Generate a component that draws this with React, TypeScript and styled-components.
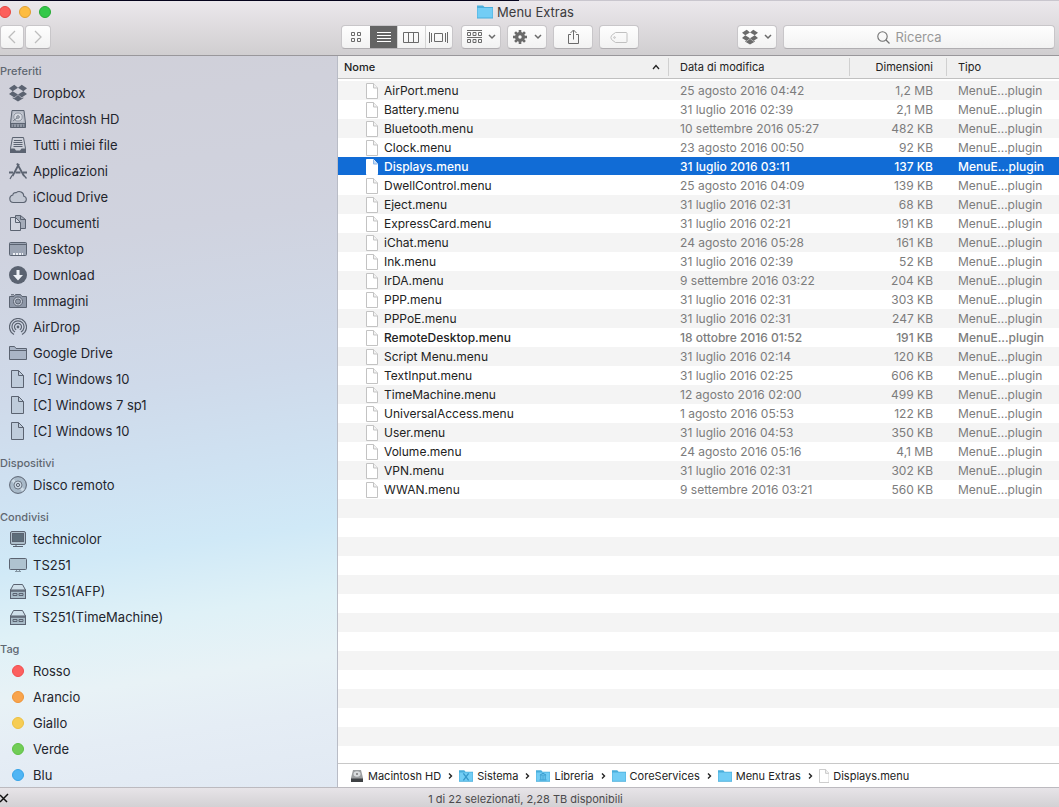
import React, { useState } from 'react';
import styled, { createGlobalStyle, css } from 'styled-components';

const GlobalStyle = createGlobalStyle`
  *, *::before, *::after { box-sizing: border-box; }
  body { margin: 0; font-family: Inter, "Liberation Sans", sans-serif; color: #222; }
  button, input { font: inherit; color: inherit; margin: 0; padding: 0; }
`;

const Window = styled.div`
  display: flex;
  flex-direction: column;
  height: 100vh;
  overflow: hidden;
  background: #fff;
`;

const TopEdge = styled.div`
  flex: none;
  height: 1px;
  background: linear-gradient(to right, #05031c 49%, #c9c6ce 49%);
`;

const TitleArea = styled.header`
  flex: none;
  height: 55px;
  padding-top: 1px;
  border-bottom: 1px solid #99979b;
  background: linear-gradient(#ebe8ec, #d0ced0);
`;

const TitleBar = styled.div`
  display: grid;
  grid-template-columns: 1fr auto 1fr;
  align-items: center;
  height: 19px;
  padding-right: 8px;
`;

const Lights = styled.div`
  display: flex;
  gap: 8px;
  margin-left: -1px;
`;

const Light = styled.button<{ $fill: string; $edge: string }>`
  width: 12px;
  height: 12px;
  border: 1px solid ${p => p.$edge};
  border-radius: 50%;
  background: ${p => p.$fill};
`;

const Title = styled.h1`
  display: flex;
  align-items: center;
  gap: 4px;
  margin: 0;
  font-size: 13px;
  font-weight: 400;
  line-height: 18px;
  color: #3b3a3d;
`;

const Toolbar = styled.div`
  display: flex;
  align-items: center;
  gap: 6px;
  height: 32px;
  padding-right: 4px;
`;

const NavGroup = styled.div`
  display: flex;
  gap: 1px;
  flex: none;
  width: 335px;
`;

const face = css`
  height: 24px;
  border: 1px solid #c8c6c9;
  border-bottom-color: #b0aeb1;
  border-radius: 4px;
  background: linear-gradient(#fefefe, #f2f2f2);
`;

const ToolButton = styled.button<{ $width: number; $tone?: string }>`
  ${face}
  display: flex;
  align-items: center;
  justify-content: center;
  gap: 6px;
  flex: none;
  width: ${p => p.$width}px;
  color: ${p => p.$tone || '#6a6a6a'};
`;

const Segments = styled.div`
  ${face}
  display: grid;
  grid-template-columns: 28px 27px 1fr 1fr;
  flex: none;
  width: 112px;
  margin-right: 2px;
  overflow: hidden;
`;

const Segment = styled.button<{ $on?: boolean }>`
  display: flex;
  align-items: center;
  justify-content: center;
  border: 0;
  border-left: 1px solid ${p => (p.$on ? '#646464' : '#d5d5d5')};
  background: ${p => (p.$on ? '#646464' : 'transparent')};
  color: ${p => (p.$on ? '#fff' : '#6a6a6a')};
  &:first-child { border-left: 0; }
`;

const Spacer = styled.div`
  flex: 1;
`;

const Search = styled.label`
  ${face}
  display: flex;
  align-items: center;
  justify-content: center;
  gap: 6px;
  flex: none;
  width: 272px;
  color: #717171;
`;

const SearchInput = styled.input`
  width: 66px;
  border: 0;
  outline: 0;
  background: transparent;
  font-size: 13px;
  line-height: 16px;
  &::placeholder { color: #989898; opacity: 1; }
`;

const Body = styled.div`
  display: flex;
  flex: 1;
  min-height: 0;
`;

const Sidebar = styled.nav`
  flex: none;
  width: 338px;
  padding-top: 6px;
  overflow: hidden;
  border-right: 1px solid #b9bcc6;
  background: linear-gradient(172deg, #d0d0d9 0%, #d0d3df 25%, #cfdaea 45%, #cfe2f2 57%, #d0e9f7 66%, #dff1f7 75%, #e8f2f6 83%, #e5edf5 90%, #e1e9f3 100%);
`;

const Group = styled.section`
  margin-bottom: 10px;
`;

const GroupTitle = styled.h2`
  margin: 0;
  font-size: 11px;
  font-weight: 500;
  line-height: 18px;
  color: #5f6771;
`;

const PlaceList = styled.ul`
  margin: 0;
  padding: 0;
  list-style: none;
`;

const Place = styled.a`
  display: flex;
  align-items: center;
  gap: 6px;
  height: 26px;
  padding-left: 9px;
  font-size: 13px;
  color: #1f252d;
  text-decoration: none;
`;

const IconSlot = styled.span`
  display: flex;
  justify-content: center;
  flex: none;
  width: 18px;
  color: #5b6371;
`;

const Dot = styled.span<{ $fill: string; $edge: string }>`
  width: 12px;
  height: 12px;
  border: 1px solid ${p => p.$edge};
  border-radius: 50%;
  background: ${p => p.$fill};
`;

const Main = styled.main`
  display: flex;
  flex-direction: column;
  flex: 1;
  min-width: 0;
`;

const Table = styled.table`
  width: 100%;
  table-layout: fixed;
  border-collapse: separate;
  border-spacing: 0;
  font-size: 12px;
  line-height: 18px;
  tbody::before { content: ''; display: block; height: 2px; }
`;

const Col = styled.col<{ $width?: number }>`
  ${p => p.$width && `width: ${p.$width}px;`}
`;

const Th = styled.th<{ $right?: boolean; $strong?: boolean }>`
  height: 23px;
  padding: 0;
  border-bottom: 1px solid #c0c0c0;
  background: #f0f0f0;
  font-size: 11px;
  font-weight: ${p => (p.$strong ? 500 : 400)};
  color: #222;
  text-align: ${p => (p.$right ? 'right' : 'left')};
`;

const ThInner = styled.div<{ $right?: boolean; $last?: boolean; $first?: boolean }>`
  display: flex;
  align-items: center;
  justify-content: ${p => (p.$right ? 'flex-end' : 'space-between')};
  height: 18px;
  padding: ${p => (p.$right ? '0 13px 0 0' : p.$first ? '0 8px 0 6px' : '0 11px')};
  border-right: ${p => (p.$last ? '0' : '1px solid #d0d0d0')};
`;

const Row = styled.tr<{ $selected?: boolean; $strong?: boolean }>`
  height: 19px;
  font-weight: ${p => (p.$selected || p.$strong ? 500 : 400)};
  color: ${p => (p.$selected ? '#fff' : '#7c7c7c')};
  &:nth-child(odd) { background: #f4f4f4; }
  ${p => p.$selected && css`&&:nth-child(n) { background: linear-gradient(#116cd6 18px, #fff 18px); }`}
  td { padding: 0 11px; white-space: nowrap; }
  td:first-child { padding: 0 0 0 28px; color: ${p => (p.$selected ? '#fff' : '#222')}; }
  td:nth-child(3) { padding: 0 14px 0 0; text-align: right; }
`;

const FileName = styled.div`
  display: flex;
  align-items: center;
  gap: 6px;
  height: 18px;
`;

const EmptyRows = styled.div`
  flex: 1;
  background: repeating-linear-gradient(#f4f4f4 0 19px, #fff 19px 38px);
`;

const PathBar = styled.ol`
  display: flex;
  align-items: center;
  flex: none;
  height: 24px;
  margin: 0;
  padding: 0 0 0 12px;
  border-top: 1px solid #c8c8c8;
  background: #fff;
  list-style: none;
  font-size: 11px;
`;

const Crumb = styled.li`
  display: flex;
  align-items: center;
  gap: 4px;
  color: #222;
`;

const Separator = styled.span`
  display: flex;
  margin: 0 2px 0 6px;
`;

const StatusBar = styled.footer`
  display: flex;
  align-items: center;
  flex: none;
  height: 20px;
  border-top: 1px solid #bcbabf;
  background: linear-gradient(#e7e4e8, #d3d1d4);
  font-size: 11px;
  line-height: 20px;
  color: #4b4a4c;
`;

const StatusText = styled.span`
  flex: 1;
  padding: 2px 17px 0 0;
  text-align: center;
`;

type SvgProps = { w?: number; h?: number; box?: string; children: React.ReactNode };
const Svg = ({ w = 18, h = 18, box, children }: SvgProps) => (
  <svg width={w} height={h} viewBox={box || `0 0 ${w} ${h}`} fill="none" stroke="currentColor" strokeWidth="1" aria-hidden="true">
    {children}
  </svg>
);

const Chevron = () => <Svg w={8} h={6}><path d="M1 1l3 3 3-3" strokeWidth="1.5" /></Svg>;

const DropboxIcon = ({ size = 18 }: { size?: number }) => (
  <Svg w={size} h={size} box="0 0 24 24">
    <path fill="currentColor" stroke="none" d="M7.060 1L0 5.610l4.882 3.910L12 5.123zM0 13.430l7.060 4.610L12 13.918 4.882 9.520zM12 13.918l4.940 4.122L24 13.430l-4.882-3.910zM24 5.610L16.940 1 12 5.123l7.118 4.397zM12.014 14.805L7.060 18.918l-2.120-1.385v1.552l7.074 4.242 7.088-4.242v-1.552l-2.120 1.385z" />
  </Svg>
);
const DriveIcon = () => (
  <Svg>
    <path d="M3 .5h12l1.500 12.500v4.500h-15V13z" fill="#b4b9c4" />
    <path d="M2 13.500h14v4H2z" fill="#8f96a3" />
    <path d="M4.500 2.500h9l1 9h-11z" fill="#c9cdd6" stroke="none" />
    <ellipse cx="9" cy="7" rx="4.200" ry="4" strokeWidth=".8" stroke="#7c8492" fill="#d8dbe2" />
    <circle cx="9" cy="7" r="1.300" strokeWidth=".8" />
    <path d="M8 8l-4 3M4.500 14.500v2.500M7.500 14.500v2.500M10.500 14.500v2.500M13.500 14.500v2.500" strokeWidth=".8" />
  </Svg>
);
const TrayIcon = () => (
  <Svg>
    <path d="M3.500 1.500h11l2 11v4h-15v-4z" fill="#cdd0d9" />
    <path d="M5 4.500h8M4.500 6.500h9M4.500 8.500h9M4.500 10.500h9" />
    <path d="M1 12.500h4.500l1.500 2h4l1.500-2H17v4.500H1z" fill="currentColor" stroke="none" />
  </Svg>
);
const AppsIcon = () => (
  <Svg>
    <path d="M10 2L3.500 14M8 1.500l7 12.500" strokeWidth="1.800" />
    <path d="M0 10.500h4M6.500 10.500h5M14 10.500h4" strokeWidth="2" />
    <path d="M3 13.500L1 17M15 13.500l2.500 3" strokeWidth="1.300" />
  </Svg>
);
const CloudIcon = () => (
  <Svg><path d="M4.300 14.500a3.800 3.800 0 0 1-.5-7.500 2.700 2.700 0 0 1 3.400-2.300 4.600 4.600 0 0 1 7.600 3.500 3.200 3.200 0 0 1-.3 6.300z" fill="#c3c8d3" strokeWidth="1.100" /></Svg>
);
const DocumentsIcon = () => (
  <Svg>
    <path d="M6.500 1.500h5l5 4v9h-10z" fill="#a4abb8" />
    <path d="M11.500 1.500v4h5" />
    <path d="M1.500 3.500h5l5 5v8h-10z" fill="#d2d5df" />
    <path d="M6.500 3.500v5h5" />
  </Svg>
);
const DesktopIcon = () => (
  <Svg>
    <rect x=".5" y="2.500" width="17" height="13" rx="1" fill="#9ba3b2" />
    <path d="M1 4.500h16" />
    <path d="M4 14h2M7 14h2M10 14h2M13 14h1" stroke="#eef0f5" strokeWidth="2" />
  </Svg>
);
const DownloadIcon = () => (
  <Svg>
    <circle cx="9" cy="9" r="9" fill="currentColor" stroke="none" />
    <path d="M7.500 4h3v5h3.500L9 14.500 4 9h3.500z" fill="#eef1f6" stroke="none" />
  </Svg>
);
const CameraIcon = () => (
  <Svg>
    <path d="M.5 4.500h4.500l1.500-2h5l1.500 2h4.500v11H.5z" fill="#8f98a8" />
    <path d="M2 2.800h3" strokeWidth="1.200" />
    <circle cx="9" cy="9.500" r="4.500" fill="#c5cbd7" />
    <circle cx="9" cy="9.500" r="2.500" fill="#9099a8" />
  </Svg>
);
const AirDropIcon = () => (
  <Svg>
    <path d="M5 16.500a8.500 8.500 0 1 1 8 0M6 14a6 6 0 1 1 6 0M7.200 11.800a3.500 3.500 0 1 1 3.600 0" strokeWidth="1.200" />
    <circle cx="9" cy="9" r="1.400" fill="currentColor" stroke="none" />
  </Svg>
);
const FolderOutlineIcon = () => (
  <Svg>
    <path d="M.5 15.500v-13h5l1.500 2h10.500v11z" fill="#aab5c6" />
    <path d="M.5 6.500h17" />
  </Svg>
);
const PageIcon = () => (
  <Svg>
    <path d="M2.500.5h7l5 5v12h-12z" fill="#bfccdb" />
    <path d="M9.500.5v5h5" />
  </Svg>
);
const DiscIcon = () => (
  <Svg>
    <circle cx="9" cy="9" r="8.400" fill="#a9bac9" />
    <path d="M3.500 4l3 3M11.500 11.500l3 3" stroke="#cfdce7" strokeWidth="3" />
    <circle cx="9" cy="9" r="4" fill="#cbd8e4" strokeWidth=".8" />
    <circle cx="9" cy="9" r="1.600" />
  </Svg>
);
const CrtIcon = () => (
  <Svg>
    <rect x="1.500" y="1.500" width="15" height="13" rx="1.500" fill="#aebfcb" />
    <rect x="3.500" y="3.500" width="11" height="8" fill="#5d6d7a" />
    <path d="M4 16.500h10M7 15v1" />
  </Svg>
);
const DisplayIcon = () => (
  <Svg>
    <rect x=".5" y="2.500" width="17" height="11" rx="1" fill="#afc3d0" />
    <path d="M7.500 14v2M10.500 14v2M6 15.500h6" stroke="#8394a1" />
  </Svg>
);
const ServerIcon = () => (
  <Svg>
    <path d="M1.500 8l3-5.500h9l3 5.500" fill="#cfe0ea" />
    <rect x="1.500" y="8" width="15" height="8.500" fill="#a9bcc8" />
    <path d="M2 9h14" strokeWidth="1.500" />
    <path d="M4 11.500h4v2H4zM10 11.500h4v2h-4z" />
  </Svg>
);

const BlueFolder = ({ size = 14, badge }: { size?: number; badge?: 'x' | 'library' }) => (
  <svg width={size} height={size} viewBox="0 0 16 16" aria-hidden="true">
    <path d="M0 14.500v-13h6l1.500 1.500H16v11.500z" fill="#49aedb" />
    <path d="M.5 13.500V4h15v9.500z" fill="#72cdf5" />
    {badge === 'x' && <path d="M5 5l6 8M11 5l-6 8" stroke="#3597c9" strokeWidth="1.500" />}
    {badge === 'library' && <path d="M4.500 7L8 4.800 11.500 7zM4 12.500h8M5.500 8v4M8 8v4M10.500 8v4" stroke="#3597c9" fill="none" />}
  </svg>
);

const FileIcon = ({ size = 16, selected }: { size?: number; selected?: boolean }) => (
  <svg width={size * 3 / 4} height={size} viewBox="0 0 12 16" aria-hidden="true">
    <path d="M.5.500h7l4 4.500v10.500H.5z" fill="#fff" stroke={selected ? '#fff' : '#c3c3c3'} />
    <path d="M7.500.5V5h4" fill={selected ? '#c3daf5' : '#f2f2f2'} stroke={selected ? '#8db8ea' : '#c3c3c3'} />
  </svg>
);

const MiniDrive = () => (
  <svg width="14" height="14" viewBox="0 0 14 14" aria-hidden="true">
    <path d="M3 1h8l2 8v4H1V9z" fill="#9b9ea0" />
    <path d="M1 9.500h12V13H1z" fill="#3e4144" />
    <ellipse cx="7" cy="5" rx="3.500" ry="2.800" fill="#d9dcde" />
    <circle cx="7" cy="5" r="1" fill="#777" />
  </svg>
);

const gearTeeth = [0, 45, 90, 135];
const GearIcon = () => (
  <Svg w={16} h={16}>
    {gearTeeth.map(angle => <path key={angle} d="M8 1v14" strokeWidth="2.600" transform={`rotate(${angle} 8 8)`} />)}
    <circle cx="8" cy="8" r="5" fill="currentColor" stroke="none" />
    <circle cx="8" cy="8" r="1.700" stroke="none" fill="#f8f8f8" />
  </Svg>
);

type PlaceItem = { name: string; icon?: React.ReactNode; dot?: [string, string] };
const groups: { title: string; places: PlaceItem[] }[] = [
  {
    title: 'Preferiti',
    places: [
      { name: 'Dropbox', icon: <DropboxIcon /> },
      { name: 'Macintosh HD', icon: <DriveIcon /> },
      { name: 'Tutti i miei file', icon: <TrayIcon /> },
      { name: 'Applicazioni', icon: <AppsIcon /> },
      { name: 'iCloud Drive', icon: <CloudIcon /> },
      { name: 'Documenti', icon: <DocumentsIcon /> },
      { name: 'Desktop', icon: <DesktopIcon /> },
      { name: 'Download', icon: <DownloadIcon /> },
      { name: 'Immagini', icon: <CameraIcon /> },
      { name: 'AirDrop', icon: <AirDropIcon /> },
      { name: 'Google Drive', icon: <FolderOutlineIcon /> },
      { name: '[C] Windows 10', icon: <PageIcon /> },
      { name: '[C] Windows 7 sp1', icon: <PageIcon /> },
      { name: '[C] Windows 10', icon: <PageIcon /> },
    ],
  },
  { title: 'Dispositivi', places: [{ name: 'Disco remoto', icon: <DiscIcon /> }] },
  {
    title: 'Condivisi',
    places: [
      { name: 'technicolor', icon: <CrtIcon /> },
      { name: 'TS251', icon: <DisplayIcon /> },
      { name: 'TS251(AFP)', icon: <ServerIcon /> },
      { name: 'TS251(TimeMachine)', icon: <ServerIcon /> },
    ],
  },
  {
    title: 'Tag',
    places: [
      { name: 'Rosso', dot: ['#fc605f', '#f24c4c'] },
      { name: 'Arancio', dot: ['#f8a44d', '#ef9437'] },
      { name: 'Giallo', dot: ['#f6cd55', '#ecc040'] },
      { name: 'Verde', dot: ['#71cd57', '#5fc144'] },
      { name: 'Blu', dot: ['#4fb5f4', '#36a4e8'] },
    ],
  },
];

const files: [string, string, string][] = [
  ['AirPort.menu', '25 agosto 2016 04:42', '1,2 MB'],
  ['Battery.menu', '31 luglio 2016 02:39', '2,1 MB'],
  ['Bluetooth.menu', '10 settembre 2016 05:27', '482 KB'],
  ['Clock.menu', '23 agosto 2016 00:50', '92 KB'],
  ['Displays.menu', '31 luglio 2016 03:11', '137 KB'],
  ['DwellControl.menu', '25 agosto 2016 04:09', '139 KB'],
  ['Eject.menu', '31 luglio 2016 02:31', '68 KB'],
  ['ExpressCard.menu', '31 luglio 2016 02:21', '191 KB'],
  ['iChat.menu', '24 agosto 2016 05:28', '161 KB'],
  ['Ink.menu', '31 luglio 2016 02:39', '52 KB'],
  ['IrDA.menu', '9 settembre 2016 03:22', '204 KB'],
  ['PPP.menu', '31 luglio 2016 02:31', '303 KB'],
  ['PPPoE.menu', '31 luglio 2016 02:31', '247 KB'],
  ['RemoteDesktop.menu', '18 ottobre 2016 01:52', '191 KB'],
  ['Script Menu.menu', '31 luglio 2016 02:14', '120 KB'],
  ['TextInput.menu', '31 luglio 2016 02:25', '606 KB'],
  ['TimeMachine.menu', '12 agosto 2016 02:00', '499 KB'],
  ['UniversalAccess.menu', '1 agosto 2016 05:53', '122 KB'],
  ['User.menu', '31 luglio 2016 04:53', '350 KB'],
  ['Volume.menu', '24 agosto 2016 05:16', '4,1 MB'],
  ['VPN.menu', '31 luglio 2016 02:31', '302 KB'],
  ['WWAN.menu', '9 settembre 2016 03:21', '560 KB'],
];

const crumbs: { name: string; icon: React.ReactNode }[] = [
  { name: 'Macintosh HD', icon: <MiniDrive /> },
  { name: 'Sistema', icon: <BlueFolder badge="x" /> },
  { name: 'Libreria', icon: <BlueFolder badge="library" /> },
  { name: 'CoreServices', icon: <BlueFolder /> },
  { name: 'Menu Extras', icon: <BlueFolder /> },
  { name: 'Displays.menu', icon: <FileIcon size={14} /> },
];

export default function App() {
  const [selected, setSelected] = useState('Displays.menu');
  return (
    <Window>
      <GlobalStyle />
      <TopEdge />
      <TitleArea>
        <TitleBar>
          <Lights>
            <Light $fill="#fc605c" $edge="#e64842" aria-label="Chiudi" />
            <Light $fill="#fdbc40" $edge="#e0a032" aria-label="Riduci" />
            <Light $fill="#34c84a" $edge="#27aa35" aria-label="Ingrandisci" />
          </Lights>
          <Title><BlueFolder size={16} />Menu Extras</Title>
        </TitleBar>
        <Toolbar>
          <NavGroup>
            <ToolButton $width={24} $tone="#bdbdbd" aria-label="Indietro"><Svg w={8} h={14}><path d="M7 1L1 7l6 6" strokeWidth="1.300" /></Svg></ToolButton>
            <ToolButton $width={26} $tone="#bdbdbd" aria-label="Avanti"><Svg w={8} h={14}><path d="M1 1l6 6-6 6" strokeWidth="1.300" /></Svg></ToolButton>
          </NavGroup>
          <Segments>
            <Segment aria-label="Icone"><Svg w={10} h={10}><path d="M.5.5h3v3h-3zM6.500.5h3v3h-3zM.5 6.500h3v3h-3zM6.500 6.500h3v3h-3z" /></Svg></Segment>
            <Segment $on aria-label="Elenco"><Svg w={14} h={12}><path d="M0 1.500h14M0 4.500h14M0 7.500h14M0 10.500h14" /></Svg></Segment>
            <Segment aria-label="Colonne"><Svg w={16} h={11}><path d="M.5.5h15v10H.5zM5.500.5v10M10.500.5v10" /></Svg></Segment>
            <Segment aria-label="Cover Flow"><Svg w={19} h={11}><path d="M.5 0v11M2.500 1v9M5.500 1.500h8v8h-8zM16.500 1v9M18.500 0v11" /></Svg></Segment>
          </Segments>
          <ToolButton $width={40} aria-label="Disponi"><Svg w={15} h={14}><path d="M0 .5h15M0 7.500h15M.5 2.500h3v3h-3zM6 2.500h3v3H6zM11.500 2.500h3v3h-3zM.5 9.500h3v3h-3zM6 9.500h3v3H6zM11.500 9.500h3v3h-3z" /></Svg><Chevron /></ToolButton>
          <ToolButton $width={40} aria-label="Azione"><GearIcon /><Chevron /></ToolButton>
          <ToolButton $width={40} aria-label="Condividi"><Svg w={13} h={16}><path d="M4 5.500H1.500v9h10v-9H9M6.500 10.500V1.500M3.500 4l3-3 3 3" /></Svg></ToolButton>
          <ToolButton $width={40} $tone="#c0c0c0" aria-label="Tag"><Svg w={18} h={11}><path d="M5.500.5H16a1 1 0 0 1 1 1v8a1 1 0 0 1-1 1H5.500L1.500 7.500Q.3 5.500 1.500 3.500z" /><circle cx="4.500" cy="5.500" r=".8" /></Svg></ToolButton>
          <Spacer />
          <ToolButton $width={40} aria-label="Dropbox"><DropboxIcon size={16} /><Chevron /></ToolButton>
          <Search>
            <Svg w={13} h={13}><circle cx="5.500" cy="5.500" r="4.700" strokeWidth="1.100" /><path d="M9 9l3.500 3.500" strokeWidth="1.200" /></Svg>
            <SearchInput placeholder="Ricerca" aria-label="Ricerca" />
          </Search>
        </Toolbar>
      </TitleArea>
      <Body>
        <Sidebar>
          {groups.map(g => (
            <Group key={g.title}>
              <GroupTitle>{g.title}</GroupTitle>
              <PlaceList>
                {g.places.map((p, i) => (
                  <li key={i}>
                    <Place href="#">
                      <IconSlot>{p.dot ? <Dot $fill={p.dot[0]} $edge={p.dot[1]} /> : p.icon}</IconSlot>
                      {p.name}
                    </Place>
                  </li>
                ))}
              </PlaceList>
            </Group>
          ))}
        </Sidebar>
        <Main>
          <Table>
            <colgroup><Col /><Col $width={181} /><Col $width={97} /><Col $width={112} /></colgroup>
            <thead>
              <tr>
                <Th $strong><ThInner $first>Nome<Svg w={8} h={6}><path d="M1 5l3-3.500L7 5" strokeWidth="1.300" /></Svg></ThInner></Th>
                <Th><ThInner>Data di modifica</ThInner></Th>
                <Th $right><ThInner $right>Dimensioni</ThInner></Th>
                <Th><ThInner $last>Tipo</ThInner></Th>
              </tr>
            </thead>
            <tbody>
              {files.map(([name, date, size]) => (
                <Row key={name} $selected={name === selected} $strong={name === 'RemoteDesktop.menu'} onClick={() => setSelected(name)}>
                  <td><FileName><FileIcon selected={name === selected} />{name}</FileName></td>
                  <td>{date}</td>
                  <td>{size}</td>
                  <td>MenuE...plugin</td>
                </Row>
              ))}
            </tbody>
          </Table>
          <EmptyRows />
          <PathBar>
            {crumbs.map((c, i) => (
              <Crumb key={c.name}>
                {i > 0 && <Separator><Svg w={6} h={8}><path d="M2 1.500L4.500 4 2 6.500" strokeWidth="1.400" /></Svg></Separator>}
                {c.icon}
                {c.name}
              </Crumb>
            ))}
          </PathBar>
        </Main>
      </Body>
      <StatusBar>
        <Svg w={9} h={12}><path d="M0 3l7 7M0 10l8-8" stroke="#111" strokeWidth="1.500" /></Svg>
        <StatusText>1 di 22 selezionati, 2,28 TB disponibili</StatusText>
      </StatusBar>
    </Window>
  );
}
